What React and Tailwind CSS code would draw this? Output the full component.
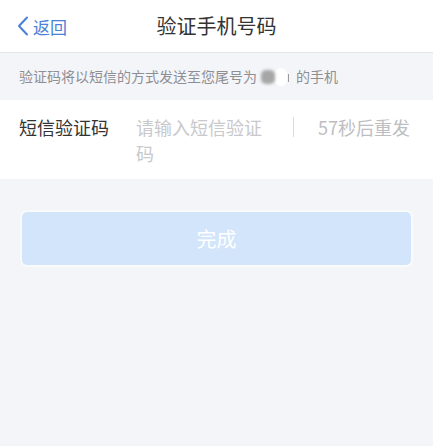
import React from "react";

export default function App() {
  const font = { fontFamily: '"Noto Sans CJK SC", "Noto Sans", sans-serif' };
  return (
    <div className="w-[433px] h-[446px] bg-[#f4f5f9] overflow-hidden" style={font}>
      <div className="h-[53px] bg-white border-b border-[#e4e5e8] grid grid-cols-[1fr_auto_1fr] items-center">
        <div className="flex items-center pl-[17px] text-[#4a80d8]">
          <svg width="12" height="20" viewBox="0 0 12 20" fill="none">
            <path d="M10 1.5 L2 10 L10 18.5" stroke="#4a80d8" strokeWidth="2" strokeLinecap="round" strokeLinejoin="round" />
          </svg>
          <span className="text-[17px] leading-none ml-[4px]">返回</span>
        </div>
        <div className="text-[20px] text-[#333] leading-none">验证手机号码</div>
        <div />
      </div>
      <div className="h-[47px] flex items-center pl-[19px] text-[14px] text-[#8e8e93]">
        <span>验证码将以短信的方式发送至您尾号为</span>
        <span className="ml-[4px] w-[14px] h-[14px] rounded-[5px] bg-[#a6a6a6] blur-[1.5px]" />
        <span className="w-[12px] h-[18px] rounded-[6px] bg-white" />
        <span className="ml-[1px] w-[1px] h-[8px] bg-[#9a9a9a] mt-[3px]" />
        <span className="ml-[7px]">的手机</span>
      </div>
      <div className="bg-white flex items-start pl-[19px] pt-[14px] pb-[13px] text-[18px] leading-[26px]">
        <div className="w-[117px] text-[#333]">短信验证码</div>
        <div className="w-[140px] text-[#c8c9cc] break-all">请输入短信验证码</div>
        <div className="w-[1px] h-[20px] bg-[#dcdcdc] mt-[3px] ml-[17px]" />
        <div className="ml-[24px] text-[#bdbec2]">57秒后重发</div>
      </div>
      <div className="px-[22px] pt-[33px]">
        <div className="h-[53px] rounded-[5px] bg-[#d3e5fb] flex items-center justify-center text-white text-[20px] ring-2 ring-[#f9fafc]">
          完成
        </div>
      </div>
    </div>
  );
}
